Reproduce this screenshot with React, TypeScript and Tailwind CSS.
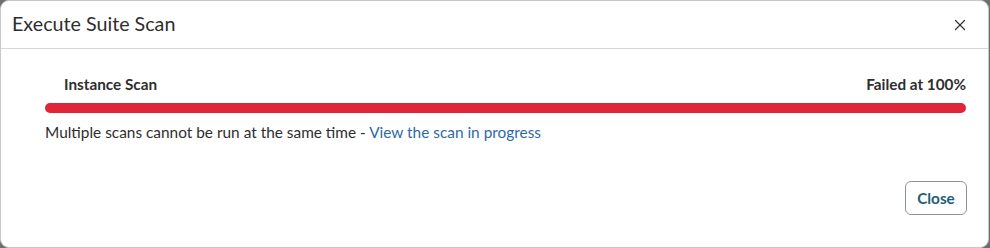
import { X } from "lucide-react"

export default function App() {
  return (
    <div className="h-[248px] w-[990px] bg-[#6e6e6e]" style={{ fontFamily: "Lato, 'Open Sans', sans-serif" }}>
      <div className="flex h-[248px] w-[989px] flex-col rounded-[9px] border border-[#c9c9c9] bg-white text-[#2e2e2e]">
        <div className="flex h-[48px] items-center justify-between border-b border-[#d6d6d6] pl-[11px] pr-[19px]">
          <h2 className="-mt-[1px] text-[19.7px] leading-none">Execute Suite Scan</h2>
          <X className="h-[18px] w-[18px] text-[#333]" strokeWidth={1.6} />
        </div>
        <div className="flex-1 pl-[44px] pr-[22px] pt-[28px]">
          <div className="flex w-[921px] items-center justify-between pl-[19px] text-[15.3px] font-bold leading-none">
            <span>Instance Scan</span>
            <span>Failed at 100%</span>
          </div>
          <div className="mt-[11px] h-[10px] w-[921px] rounded-full bg-[#e0243a]"></div>
          <p className="mt-[8px] text-[15.4px] leading-[22px]">
            Multiple scans cannot be run at the same time - <a className="text-[#2d6aa8]">View the scan in progress</a>
          </p>
        </div>
        <div className="flex justify-end pb-[32px] pr-[21px]">
          <button className="h-[34px] w-[62px] rounded-[6px] border border-[#8c959b] text-[15.3px] font-bold text-[#1d6078]">
            Close
          </button>
        </div>
      </div>
    </div>
  )
}
